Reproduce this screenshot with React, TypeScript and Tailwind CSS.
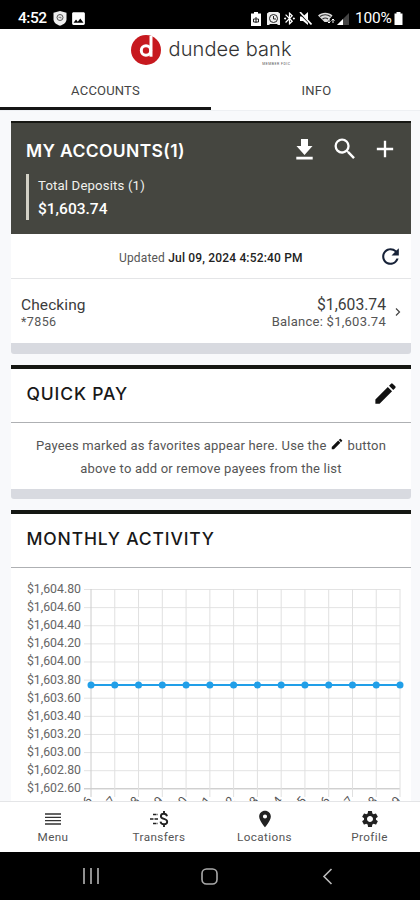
import type { ReactNode } from "react";
import {
  MdAdd,
  MdBluetoothConnected,
  MdEdit,
  MdImage,
  MdLocationOn,
  MdRefresh,
  MdSearch,
  MdSettings,
} from "react-icons/md";

const heading = "font-['Inter',sans-serif] leading-6";

const yLabels = [
  "$1,604.80",
  "$1,604.60",
  "$1,604.40",
  "$1,604.20",
  "$1,604.00",
  "$1,603.80",
  "$1,603.60",
  "$1,603.40",
  "$1,603.20",
  "$1,603.00",
  "$1,602.80",
  "$1,602.60",
];

const days = [
  "Jun 26", "Jun 27", "Jun 28", "Jun 29", "Jun 30", "Jul 01", "Jul 02",
  "Jul 03", "Jul 04", "Jul 05", "Jul 06", "Jul 07", "Jul 08", "Jul 09",
];

function StatusBar() {
  return (
    <div className="flex h-[29px] shrink-0 items-center justify-between bg-black pt-[8px] pr-[17px] pl-[18px] text-white">
      <div className="flex items-center">
        <span className="w-[30px] text-[15.5px] leading-none font-medium tracking-[-0.5px]">4:52</span>
        <svg width="14" height="15" viewBox="0 0 14 15" className="ml-[5px]">
          <path d="M7 0l6.500 1.800v6.400c0 3-2.600 5.200-6.500 6.500C3.100 13.400.5 11.200.5 8.200V1.800z" fill="#eee" />
          <circle cx="7" cy="6.500" r="3" fill="none" stroke="#555" strokeWidth="1" />
          <path d="M5.500 6.300h2.500v1.200" fill="none" stroke="#777" />
        </svg>
        <MdImage size={17} className="ml-[3px]" />
      </div>
      <div className="flex items-center">
        <svg width="10" height="14" viewBox="0 0 10 14">
          <path d="M3 0h4v1.500h3V14H0V1.500h3z" fill="#fff" />
          <path d="M5 5v6M2.500 7h5v3h-5z" fill="none" stroke="#222" strokeWidth="1" />
        </svg>
        <svg width="13" height="13" viewBox="0 0 13 13" className="ml-[6px]">
          <path d="M0 1.500L2 0h9l2 1.500V13h-2l-1-1H3l-1 1H0z" fill="#eee" />
          <circle cx="6.500" cy="6.500" r="4" fill="none" stroke="#222" />
          <path d="M6.500 4v3H9" fill="none" stroke="#222" />
        </svg>
        <MdBluetoothConnected size={15} className="ml-[2px]" />
        <svg width="13" height="13" viewBox="0 0 13 13" className="ml-[2px]">
          <path d="M1 4.500h3L9 0v13L4 9H1z" fill="#fff" />
          <path d="M0 0l12 12.500" stroke="#000" strokeWidth="2" />
          <path d="M1 0l11.500 12.500" stroke="#fff" strokeWidth="1.600" />
        </svg>
        <svg width="17" height="13" viewBox="0 0 17 13" className="ml-[6px]">
          <path d="M0 3.500C3.800-.2 10.700-.2 14.500 3.500L9 10H6.500z" fill="#ddd" />
          <path d="M2 4.500c3-2.300 7.500-2.300 10.500 0M4.500 7c1.700-1.200 4-1.200 5.500 0" fill="none" stroke="#333" strokeWidth="1.100" />
          <path d="M11 7v4M9.500 9.500L11 11l1.500-1.500M15 11V7M13.500 8.500L15 7l1.500 1.500" fill="none" stroke="#fff" strokeWidth="1" />
        </svg>
        <svg width="12" height="12" viewBox="0 0 12 12" className="ml-[2px]">
          <path d="M12 0v12H0z" fill="#444" />
          <path d="M6 6v6H0z" fill="#fff" />
        </svg>
        <span className="ml-[6px] w-[39px] text-[15.500px] leading-none tracking-[-0.2px]">100%</span>
        <svg width="9" height="13" viewBox="0 0 9 13">
          <path d="M2.500 0h4v1.500H8.500V13H.5V1.500h2z" fill="#fff" />
        </svg>
      </div>
    </div>
  );
}

function Header() {
  return (
    <header className="shrink-0 bg-white">
      <div className="flex h-[42px] pt-[6px] pl-[131px]">
        <svg width="30" height="30" viewBox="0 0 30 30">
          <circle cx="15" cy="15" r="15" fill="#c7191f" />
          <circle cx="15" cy="15.500" r="4.700" fill="none" stroke="#fff" strokeWidth="3" />
          <path d="M20 1v20.700" stroke="#fff" strokeWidth="3" />
        </svg>
        <div className="ml-[7.500px] w-[122px]">
          <div className="font-['Inter',sans-serif] text-[20px] leading-[28px] font-light tracking-[0.1px] whitespace-nowrap text-[#333]">dundee bank</div>
          <div className="text-right text-[3.500px] leading-[2px] tracking-[0.5px] text-[#555]">MEMBER FDIC</div>
        </div>
      </div>
      <div className="flex h-10 border-b border-[#eef0f3] text-center text-[13px] text-[#444]">
        <button className="flex w-[211px] items-start justify-center border-b-[3px] border-[#151515] pt-[10px] tracking-[0.2px]">ACCOUNTS</button>
        <button className="flex flex-1 items-start justify-center pt-[10px] pl-[2px] tracking-[0.3px]">INFO</button>
      </div>
    </header>
  );
}

function SectionTitle({ children, action }: { children: ReactNode; action?: ReactNode }) {
  return (
    <div className="flex h-[54px] items-center justify-between border-b border-[#aeb0b3] pr-[14px] pb-[4px] pl-[15.500px] text-[#181818]">
      <h2 className={`${heading} text-[17.500px] font-medium tracking-[0.850px]`}>{children}</h2>
      {action}
    </div>
  );
}

function MyAccounts() {
  return (
    <section className="h-[233px] rounded-b-[3px] border-b-[11px] border-[#d8dae0] bg-white">
      <div className="h-[113px] border-t-2 border-t-[#161713] bg-[#454640] pt-[12px] pl-[15px] text-white">
        <div className="flex items-center justify-between pr-[16px]">
          <h2 className={`${heading} pt-[3px] text-[17.500px] font-semibold tracking-[0.350px]`}>MY ACCOUNTS(1)</h2>
          <div className="flex items-center">
            <svg width="17" height="21" viewBox="0 0 17 21">
              <path d="M5 0h7v7h4.500l-8 9-8-9H5zM.3 17.700h16.400v2.800H.3z" fill="#fff" />
            </svg>
            <MdSearch size={28} className="ml-[18px]" />
            <MdAdd size={28} className="mr-[-4px] ml-[12px]" />
          </div>
        </div>
        <div className="mt-[11px] h-[46px] border-l-[3px] border-[#d3d1c6] pt-[3px] pl-[9px]">
          <div className="text-[13.200px] leading-[18px] tracking-[0.150px] text-[#f1f1ee]">Total Deposits (1)</div>
          <div className="mt-[4px] text-[15.500px] leading-5 font-medium">$1,603.74</div>
        </div>
      </div>
      <div className="flex h-[45px] items-center border-b border-[#e4e5e7] pt-[1px] pr-[10px] pl-[108px] text-[12px]">
        <span className="flex-1 pt-[2px] tracking-[0.170px] whitespace-nowrap text-[#555]">
          Updated <b className="font-medium text-[#222]">Jul 09, 2024 4:52:40 PM</b>
        </span>
        <MdRefresh size={25} className="mr-[-2px] text-[#172238]" />
      </div>
      <div className="flex justify-between pt-[16px] pr-[10px] pl-[10px] text-[#3c3c3c]">
        <div>
          <div className="text-[15.500px] leading-[20px] tracking-[0.1px]">Checking</div>
          <div className="text-[12.500px] leading-[14px] tracking-[0.4px] text-[#555]">*7856</div>
        </div>
        <div className="flex items-start">
          <div className="text-right">
            <div className="text-[15.700px] leading-[20px]">$1,603.74</div>
            <div className="text-[13px] leading-[14px] tracking-[0.250px] text-[#555]">Balance: $1,603.74</div>
          </div>
          <svg width="6" height="8" viewBox="0 0 6 8" className="mt-[13px] ml-[9px]">
            <path d="M1 .5L4.500 4 1 7.500" fill="none" stroke="#444" strokeWidth="1.200" />
          </svg>
        </div>
      </div>
    </section>
  );
}

function QuickPay() {
  return (
    <section className="mt-[11px] h-[134px] rounded-b-[3px] border-t-[4px] border-b-[10px] border-t-[#151713] border-b-[#d8dae0] bg-white">
      <SectionTitle action={<MdEdit size={27} className="mr-[-2px] text-[#111]" />}>QUICK PAY</SectionTitle>
      <p className="pt-[11px] text-center text-[13px] leading-[23px] tracking-[0.200px] whitespace-nowrap text-[#555]">
        Payees marked as favorites appear here. Use the{" "}
        <MdEdit size={14} className="inline align-[-1px] text-[#111]" /> button
        <br />
        above to add or remove payees from the list
      </p>
    </section>
  );
}

function Chart() {
  const left = 80;
  const step = 23.77;
  return (
    <svg width="400" height="300" viewBox="0 0 400 300" className="block">
      {yLabels.map((label, i) => {
        const y = 21.5 + i * 18.12;
        const last = i === yLabels.length - 1;
        return (
          <g key={label}>
            <line x1={left - 7} x2={left + step * 13} y1={y} y2={y} stroke={last ? "#bbb" : "#e3e3e3"} />
            <text x="70" y={y + 3.5} textAnchor="end" fontSize="12.300" fill="#666">{label}</text>
          </g>
        );
      })}
      {days.map((day, i) => {
        const x = left + i * step;
        return (
          <g key={day}>
            <line x1={x} x2={x} y1="21" y2="229" stroke={i === 0 ? "#ccc" : "#e0e0e0"} />
            <text transform={`translate(${x + 2} 233) rotate(-50)`} textAnchor="end" fontSize="12.300" fill="#555">{day}</text>
          </g>
        );
      })}
      <line x1={left} x2={left + step * 13} y1="117" y2="117" stroke="#219fe8" strokeWidth="2" />
      {days.map((day, i) => (
        <circle key={day} cx={left + i * step} cy="117" r="3.500" fill="#219fe8" />
      ))}
    </svg>
  );
}

function MonthlyActivity() {
  return (
    <section className="mt-[11px] border-t-[4px] border-[#151713] bg-white">
      <SectionTitle>MONTHLY ACTIVITY</SectionTitle>
      <Chart />
    </section>
  );
}

function MenuIcon() {
  return (
    <svg width="16" height="12" viewBox="0 0 16 12">
      <path d="M0 1h16M0 4.300h16M0 7.700h16M0 11h16" stroke="#333" strokeWidth="1.300" />
    </svg>
  );
}

function TransfersIcon() {
  return (
    <svg width="19" height="16" viewBox="0 0 19 16" fill="none" stroke="#222">
      <path d="M3 3.500h5M0 8h8M3 12.500h5" strokeWidth="1.300" strokeDasharray="3.500 1" />
      <path d="M17 5.200C16.600 3.500 15.600 2.800 13.900 2.800c-1.800 0-3 .8-3 2.400 0 3.600 6.300 1.900 6.300 5.600 0 1.600-1.300 2.500-3.200 2.500-2 0-3.200-.9-3.500-2.700M14 0v3M14 13v3" strokeWidth="1.900" />
    </svg>
  );
}

function BottomNav() {
  const items = [
    { label: "Menu", icon: <MenuIcon /> },
    { label: "Transfers", icon: <TransfersIcon /> },
    { label: "Locations", icon: <MdLocationOn size={20} /> },
    { label: "Profile", icon: <MdSettings size={20} /> },
  ];
  return (
    <nav className="grid h-[51px] shrink-0 grid-cols-[106px_106px_105px_105px] border-t border-[#e4e5e7] bg-white">
      {items.map(({ label, icon }) => (
        <button key={label} className="flex flex-col items-center pt-[6px] text-[#222]">
          <span className="flex h-[21px] items-center">{icon}</span>
          <span className="text-[11.700px] leading-[17px] tracking-[0.4px] text-[#555]">{label}</span>
        </button>
      ))}
    </nav>
  );
}

function SystemNav() {
  return (
    <div className="grid h-12 shrink-0 grid-cols-[182px_54px_182px] items-center bg-black">
      <svg width="18" height="16" viewBox="0 0 18 16" className="justify-self-center">
        <path d="M2 0v16M9 0v16M16 0v16" stroke="#aaa" strokeWidth="1.700" />
      </svg>
      <svg width="17" height="17" viewBox="0 0 17 17" className="justify-self-center">
        <rect x="1" y="1" width="15" height="15" rx="4.500" fill="none" stroke="#aaa" strokeWidth="1.600" />
      </svg>
      <svg width="11" height="17" viewBox="0 0 11 17" className="justify-self-center">
        <path d="M9.500 1L2 8.500 9.500 16" fill="none" stroke="#bbb" strokeWidth="1.600" />
      </svg>
    </div>
  );
}

export default function App() {
  return (
    <div className="flex h-[900px] w-[420px] flex-col overflow-hidden bg-[#f8f9fb] font-['Roboto',sans-serif]">
      <StatusBar />
      <Header />
      <main className="min-h-0 flex-1 overflow-hidden pt-[10px] pr-[9px] pl-[11px]">
        <MyAccounts />
        <QuickPay />
        <MonthlyActivity />
      </main>
      <BottomNav />
      <SystemNav />
    </div>
  );
}
